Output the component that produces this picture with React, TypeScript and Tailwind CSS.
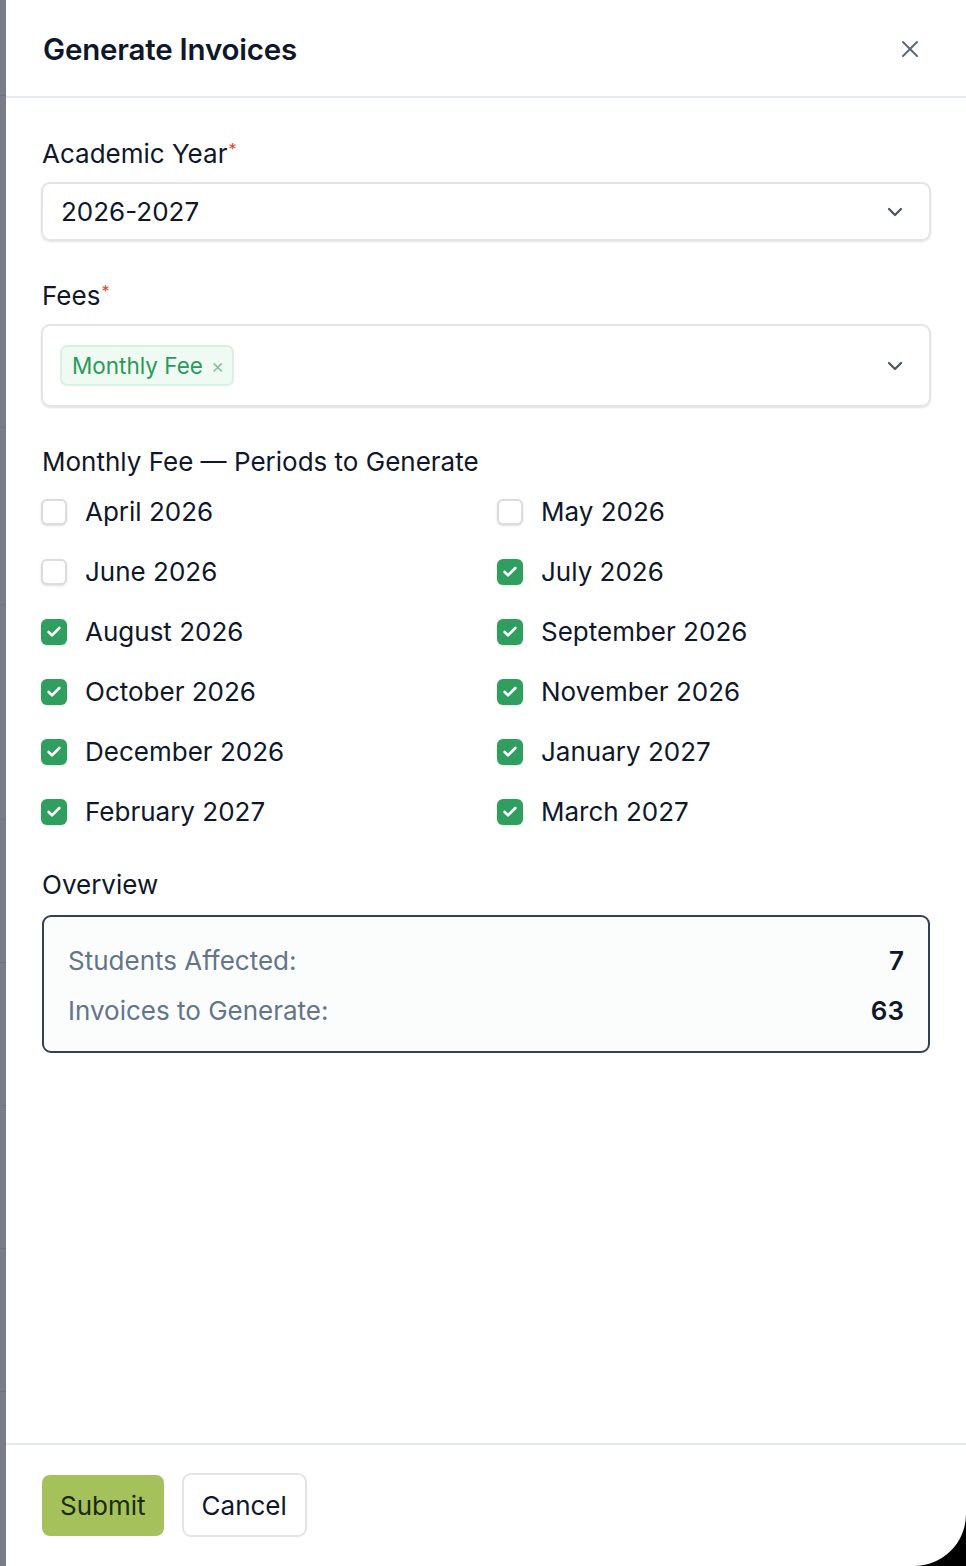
import React from "react";
import { ChevronDown, X, Check } from "lucide-react";

const periods = [
  { label: "April 2026", checked: false },
  { label: "May 2026", checked: false },
  { label: "June 2026", checked: false },
  { label: "July 2026", checked: true },
  { label: "August 2026", checked: true },
  { label: "September 2026", checked: true },
  { label: "October 2026", checked: true },
  { label: "November 2026", checked: true },
  { label: "December 2026", checked: true },
  { label: "January 2027", checked: true },
  { label: "February 2027", checked: true },
  { label: "March 2027", checked: true },
];

const Label = ({ children, required }: { children: React.ReactNode; required?: boolean }) => (
  <div className="text-[26px] leading-[36px] text-[#0f172a] pl-[1px]">
    {children}
    {required && <sup className="text-[#d9482b] text-[16px] ml-[1px] relative -top-[8px]">*</sup>}
  </div>
);

const Checkbox = ({ checked }: { checked: boolean }) =>
  checked ? (
    <div className="w-[26px] h-[26px] rounded-[6px] bg-[#2f9e5e] flex items-center justify-center shadow-sm">
      <Check className="w-[16px] h-[16px] text-white" strokeWidth={4} />
    </div>
  ) : (
    <div className="w-[26px] h-[26px] rounded-[6px] border-2 border-[#dcdcdf] bg-white shadow-sm" />
  );

export default function App() {
  return (
    <div className="w-[966px] h-[1566px] bg-black overflow-hidden" style={{ fontFamily: "Inter, 'Noto Sans', sans-serif" }}>
      <div className="flex w-full h-full rounded-br-[52px] overflow-hidden">
        {/* backdrop strip */}
        <div className="w-[6px] bg-[#7b7d85] flex flex-col">
          <div className="h-[96px] border-b border-[#6f7178]" />
          <div className="h-[332px] border-b border-[#6f7178]" />
          <div className="h-[177px] border-b border-[#6f7178]" />
          <div className="h-[215px] border-b border-[#6f7178]" />
          <div className="h-[143px] border-b border-[#6f7178]" />
          <div className="h-[143px] border-b border-[#6f7178]" />
          <div className="h-[143px] border-b border-[#6f7178]" />
          <div className="h-[143px] border-b border-[#6f7178]" />
          <div className="flex-1" />
        </div>

        {/* drawer */}
        <div className="flex-1 bg-white flex flex-col">
          <div className="h-[98px] border-b-2 border-[#e5e9f0] flex items-center justify-between pl-[37px] pr-[42px] pt-[2px]">
            <h2 className="text-[29.5px] font-semibold text-[#0f172a] tracking-[-0.2px]">Generate Invoices</h2>
            <X className="w-[28px] h-[28px] text-[#5f6b7d]" strokeWidth={1.75} />
          </div>

          <div className="flex-1 px-[35px] pt-[38px] flex flex-col">
            <Label required>Academic Year</Label>
            <div className="mt-[10px] h-[59px] rounded-[9px] border-2 border-[#e4e4e7] shadow-[0_1px_2px_rgba(0,0,0,0.12)] flex items-center justify-between pl-[18px] pr-[22px]">
              <span className="text-[26px] text-[#0f172a]">2026-2027</span>
              <ChevronDown className="w-[24px] h-[24px] text-[#4b5563]" strokeWidth={2.25} />
            </div>

            <div className="mt-[37px]">
              <Label required>Fees</Label>
            </div>
            <div className="mt-[10px] h-[83px] rounded-[9px] border-2 border-[#e4e4e7] shadow-[0_1px_2px_rgba(0,0,0,0.12)] flex items-center justify-between pl-[17px] pr-[22px]">
              <span className="h-[41px] pl-[10px] pr-[8px] rounded-[7px] bg-[#effaf3] border-2 border-[#d9f1e2] flex items-center gap-[8px]">
                <span className="text-[22.5px] text-[#2a9a5a]">Monthly Fee</span>
                <span className="text-[20px] text-[#8fbfa2] leading-none">×</span>
              </span>
              <ChevronDown className="w-[24px] h-[24px] text-[#4b5563]" strokeWidth={2.25} />
            </div>

            <div className="mt-[37px]">
              <Label>Monthly Fee — Periods to Generate</Label>
            </div>
            <div className="mt-[14px] grid grid-cols-2 gap-x-[22px] gap-y-[24px]">
              {periods.map((p) => (
                <div key={p.label} className="flex items-center gap-[18px] h-[36px]">
                  <Checkbox checked={p.checked} />
                  <span className="text-[26px] text-[#0f172a] leading-[36px]">{p.label}</span>
                </div>
              ))}
            </div>

            <div className="mt-[37px]">
              <Label>Overview</Label>
            </div>
            <div className="mt-[12px] mx-[1px] rounded-[9px] border-2 border-[#334155] bg-[#fbfdfd] px-[24px] pt-[25px] pb-[23px] flex flex-col gap-[14px]">
              <div className="flex items-center justify-between h-[36px]">
                <span className="text-[26px] text-[#64748b]">Students Affected:</span>
                <span className="text-[26px] font-semibold text-[#0f172a]">7</span>
              </div>
              <div className="flex items-center justify-between h-[36px]">
                <span className="text-[26px] text-[#64748b]">Invoices to Generate:</span>
                <span className="text-[26px] font-semibold text-[#0f172a]">63</span>
              </div>
            </div>
          </div>

          <div className="h-[123px] border-t-2 border-[#e5e9f0] px-[36px] pt-[30px] flex items-start gap-[18px]">
            <button className="h-[61px] px-[18px] rounded-[8px] bg-[#a4c15c] text-[26px] text-[#1c2a0c]">Submit</button>
            <button className="h-[64px] -mt-[2px] px-[18px] rounded-[9px] border-2 border-[#e4e4e7] bg-white text-[26px] text-[#0f172a]">Cancel</button>
          </div>
        </div>
      </div>
    </div>
  );
}
